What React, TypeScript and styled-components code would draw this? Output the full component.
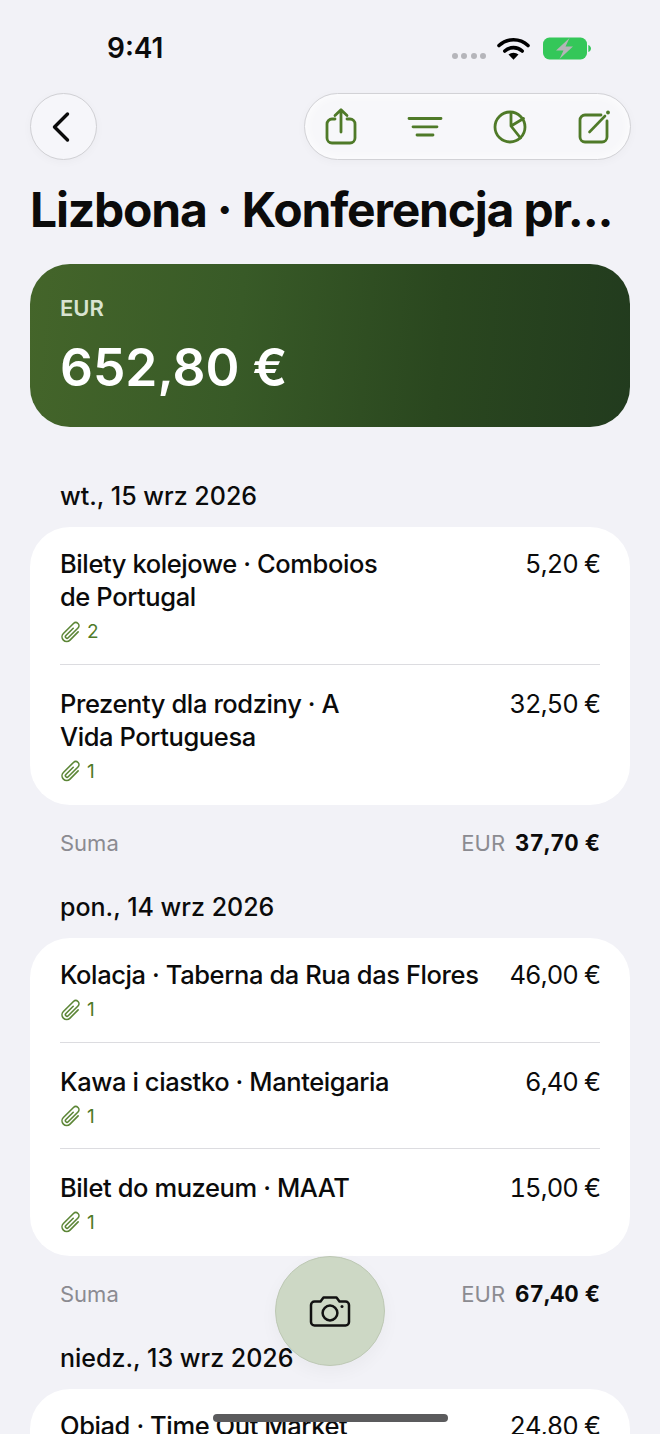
import React from "react";
import styled, { createGlobalStyle } from "styled-components";

interface Expense {
  name: string;
  amount: string;
  files: number;
}

interface Day {
  date: string;
  items: Expense[];
  total?: string;
}

const GREEN = "#4f7a28";

const days: Day[] = [
  {
    date: "wt., 15 wrz 2026",
    total: "37,70 €",
    items: [
      { name: "Bilety kolejowe · Comboios\nde Portugal", amount: "5,20 €", files: 2 },
      { name: "Prezenty dla rodziny · A\nVida Portuguesa", amount: "32,50 €", files: 1 },
    ],
  },
  {
    date: "pon., 14 wrz 2026",
    total: "67,40 €",
    items: [
      { name: "Kolacja · Taberna da Rua das Flores", amount: "46,00 €", files: 1 },
      { name: "Kawa i ciastko · Manteigaria", amount: "6,40 €", files: 1 },
      { name: "Bilet do muzeum · MAAT", amount: "15,00 €", files: 1 },
    ],
  },
  {
    date: "niedz., 13 wrz 2026",
    items: [{ name: "Obiad · Time Out Market", amount: "24,80 €", files: 1 }],
  },
];

const App = () => (
  <Page>
    <GlobalStyle />
    <StatusBar>
      <Clock>9:41</Clock>
      <StatusIcons>
        <SignalDots>
          <i />
          <i />
          <i />
          <i />
        </SignalDots>
        <WifiIcon />
        <BatteryIcon />
      </StatusIcons>
    </StatusBar>

    <NavBar>
      <BackButton>
        <svg width="24" height="34" viewBox="0 0 24 34" fill="none">
          <path d="M18.500 4 5.500 17l13 13" stroke="#0b0b0b" strokeWidth="3.400" strokeLinecap="round" strokeLinejoin="round" />
        </svg>
      </BackButton>
      <ActionPill>
        <ToolIcon>
          <path d="M14 12h-3a5 5 0 0 0-5 5v14a5 5 0 0 0 5 5h18a5 5 0 0 0 5-5V17a5 5 0 0 0-5-5h-3" />
          <path d="M20 25V3M14 8.500 20 2.800l6 5.700" />
        </ToolIcon>
        <ToolIcon>
          <path d="M4 11.500h32M8 19.800h24M12 28h16" />
        </ToolIcon>
        <ToolIcon>
          <circle cx="20" cy="20" r="15" />
          <path d="M21 5.500V19l12.500-7.500M21 19l9.500 12" />
        </ToolIcon>
        <ToolIcon>
          <path d="M27 8H11a5 5 0 0 0-5 5v17a5 5 0 0 0 5 5h17a5 5 0 0 0 5-5V14" />
          <path d="M15.500 25 31 9" strokeWidth="2.600" />
          <circle cx="34" cy="5.500" r="1.200" fill={GREEN} strokeWidth="1.400" />
        </ToolIcon>
      </ActionPill>
    </NavBar>

    <Title>Lizbona · Konferencja pr...</Title>

    <Hero>
      <HeroLabel>EUR</HeroLabel>
      <HeroAmount>652,80 €</HeroAmount>
    </Hero>

    {days.map(day => (
      <DaySection key={day.date}>
        <DayTitle>{day.date}</DayTitle>
        <Card>
          {day.items.map(item => (
            <Row key={item.name}>
              <div>
                <RowName>{item.name}</RowName>
                <Attachments>
                  <ClipIcon />
                  {item.files}
                </Attachments>
              </div>
              <RowAmount>{item.amount}</RowAmount>
            </Row>
          ))}
        </Card>
        {day.total && (
          <Summary>
            <span>Suma</span>
            <SummaryRight>
              EUR<strong>{day.total}</strong>
            </SummaryRight>
          </Summary>
        )}
      </DaySection>
    ))}

    <CameraButton>
      <svg width="42" height="32" viewBox="0 0 42 32" fill="none" stroke="#111" strokeWidth="2.500" strokeLinejoin="round">
        <path d="M5.500 6.500h6l3-4h13l3 4h6a3.500 3.500 0 0 1 3.500 3.500v17a3.500 3.500 0 0 1-3.500 3.500h-31A3.500 3.500 0 0 1 2 27V10a3.500 3.500 0 0 1 3.500-3.500Z" />
        <circle cx="21" cy="18" r="7.400" />
        <circle cx="33" cy="11.500" r="1.500" fill="#111" stroke="none" />
      </svg>
    </CameraButton>
    <HomeIndicator />
  </Page>
);

const ClipIcon = () => (
  <svg width="22" height="22" viewBox="0 0 26 26" fill="none" stroke="#5c8636" strokeWidth="1.900" strokeLinecap="round">
    <g transform="rotate(45 13 13)">
      <path d="M11.700 8v12.200a1.900 1.900 0 0 0 3.800 0V3.800a3.800 3.800 0 0 0-7.600 0v16.800a5.500 5.500 0 0 0 11 0V7" />
    </g>
  </svg>
);

const WifiIcon = () => (
  <svg width="33" height="23" viewBox="0 0 33 23" fill="none">
    <path d="M2 8.500a21 21 0 0 1 29 0" stroke="#000" strokeWidth="3.600" strokeLinecap="round" />
    <path d="M7.800 14a13 13 0 0 1 17.400 0" stroke="#000" strokeWidth="3.600" strokeLinecap="round" />
    <path d="M11.500 17.600a7.500 7.500 0 0 1 10 0l-5 5.200Z" fill="#000" />
  </svg>
);

const BatteryIcon = () => (
  <svg width="48" height="23" viewBox="0 0 48 23">
    <rect x="0" y="0.500" width="44" height="22" rx="6.500" fill="#34c759" />
    <path d="M45.300 8c1.600.5 2.700 2 2.700 3.500s-1.100 3-2.700 3.500Z" fill="#34c759" />
    <path d="M26.500 1 13 13.500h7.500L16.500 22 30 9.500h-7.500Z" fill="#b4b5b8" />
  </svg>
);

const ToolIcon = ({ children }: { children: React.ReactNode }) => (
  <ToolSvg viewBox="0 0 40 40" fill="none">
    {children}
  </ToolSvg>
);

const GlobalStyle = createGlobalStyle`
  html,
  body {
    margin: 0;
    padding: 0;
    background: #f2f2f7;
  }

  body {
    font-family: "Inter", "Liberation Sans", sans-serif;
    color: #0b0b0b;
  }
`;

const Page = styled.div`
  background: #f2f2f7;
  height: 1434px;
  overflow: hidden;
  position: relative;
  width: 660px;
`;

const StatusBar = styled.div`
  align-items: flex-start;
  box-sizing: border-box;
  display: flex;
  height: 93px;
  justify-content: space-between;
  padding: 30px 69px 0 107px;
`;

const Clock = styled.div`
  font-size: 28px;
  font-weight: 600;
  line-height: 36px;
`;

const StatusIcons = styled.div`
  align-items: center;
  display: flex;
  margin-top: 7px;

  svg + svg {
    margin-left: 13px;
  }
`;

const SignalDots = styled.div`
  display: flex;
  gap: 3.500px;
  margin: 15px 11px 0 0;

  i {
    background: #b5b5ba;
    border-radius: 50%;
    display: block;
    height: 6px;
    width: 6px;
  }
`;

const NavBar = styled.div`
  align-items: center;
  display: flex;
  justify-content: space-between;
  padding: 0 29px 0 30px;
`;

const BackButton = styled.button`
  align-items: center;
  background: #f6f6fa;
  border: 1px solid #d0d0d4;
  border-radius: 50%;
  box-shadow: 0 2px 10px rgba(0, 0, 0, 0.03);
  display: flex;
  height: 67px;
  justify-content: center;
  padding: 0 6px 0 0;
  width: 67px;
`;

const ActionPill = styled.div`
  align-items: center;
  background: #f7f7fa;
  border: 1px solid #d2d2d6;
  border-radius: 34px;
  box-shadow: inset 0 0 12px rgba(255, 255, 255, 0.9), 0 2px 10px rgba(0, 0, 0, 0.03);
  box-sizing: border-box;
  display: flex;
  height: 67px;
  justify-content: space-between;
  padding: 0 16px;
  width: 327px;
`;

const ToolSvg = styled.svg`
  flex: none;
  height: 40px;
  stroke: ${GREEN};
  stroke-linecap: round;
  stroke-linejoin: round;
  stroke-width: 2.800;
  width: 40px;
`;

const Title = styled.h1`
  font-size: 48px;
  font-weight: 700;
  letter-spacing: -1.200px;
  line-height: 60px;
  margin: 20px 0 24px 30px;
  white-space: nowrap;
`;

const Hero = styled.div`
  background: linear-gradient(95deg, #44652a 0%, #385a27 35%, #2a471f 68%, #223b1e 100%);
  border-radius: 40px;
  box-sizing: border-box;
  color: #fff;
  height: 163px;
  margin: 0 30px 52px;
  padding: 30px 30px 0;
`;

const HeroLabel = styled.div`
  color: #d8e3d0;
  font-size: 22px;
  font-weight: 600;
  line-height: 28px;
`;

const HeroAmount = styled.div`
  font-size: 51.500px;
  font-weight: 600;
  line-height: 60px;
  margin-top: 15px;
`;

const DaySection = styled.section`
  margin-bottom: 32px;
`;

const DayTitle = styled.h2`
  font-size: 25px;
  font-weight: 500;
  line-height: 34px;
  margin: 0 0 14px 60px;
`;

const Card = styled.div`
  background: #fff;
  border-radius: 40px;
  margin: 0 30px;
  padding: 0 30px;
`;

const Row = styled.div`
  align-items: flex-start;
  display: flex;
  justify-content: space-between;
  padding: 21.500px 0 15.500px;

  &:first-child {
    padding-bottom: 16px;
    padding-top: 20px;
  }

  & + & {
    border-top: 1px solid #dcdce0;
  }

  &:last-child {
    padding-bottom: 17.500px;
  }
`;

const RowName = styled.div`
  font-size: 25.500px;
  font-weight: 500;
  letter-spacing: -0.400px;
  line-height: 33px;
  white-space: pre-line;
`;

const RowAmount = styled.div`
  font-size: 25.500px;
  font-variant-numeric: tabular-nums;
  letter-spacing: -0.900px;
  line-height: 33px;
  white-space: nowrap;
`;

const Attachments = styled.div`
  align-items: center;
  box-sizing: border-box;
  color: ${GREEN};
  display: flex;
  font-size: 19px;
  gap: 5px;
  height: 35px;
  padding-top: 2px;
`;

const Summary = styled.div`
  align-items: center;
  color: #8b8b91;
  display: flex;
  font-size: 22px;
  justify-content: space-between;
  line-height: 30px;
  margin-top: 23px;
  padding: 0 60px;
`;

const SummaryRight = styled.span`
  align-items: baseline;
  display: flex;
  gap: 10px;

  strong {
    color: #0b0b0b;
    font-size: 22.300px;
    font-variant-numeric: tabular-nums;
    font-weight: 700;
  }
`;

const CameraButton = styled.button`
  align-items: center;
  background: #cdd8c5;
  border: 1px solid #bdc8b4;
  border-radius: 50%;
  box-shadow: 0 6px 18px rgba(0, 0, 0, 0.04);
  display: flex;
  height: 110px;
  justify-content: center;
  left: 275px;
  padding: 0;
  position: absolute;
  top: 1256px;
  width: 110px;
`;

const HomeIndicator = styled.div`
  background: #5b5b5d;
  border-radius: 4px;
  height: 8px;
  left: 213px;
  position: absolute;
  top: 1414px;
  width: 235px;
`;

export default App;
